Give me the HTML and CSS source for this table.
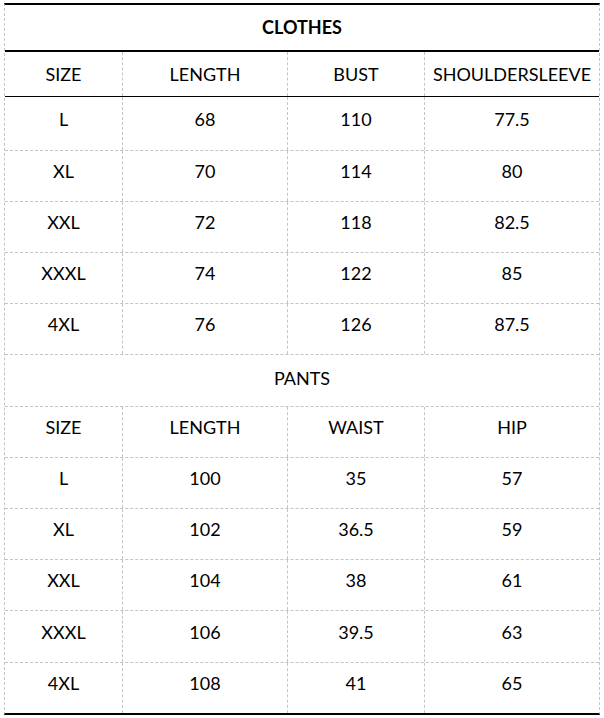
FILE: index.html
```html
<!DOCTYPE html>
<html lang="en">
<head>
<meta charset="utf-8">
<title>Size chart</title>
<link rel="stylesheet" href="styles.css">
</head>
<body>
<div class="sheet">
  <div class="row title-row"><div class="cell span">CLOTHES</div></div>
  <div class="row head-row">
    <div class="cell">SIZE</div><div class="cell">LENGTH</div><div class="cell">BUST</div><div class="cell">SHOULDERSLEEVE</div>
  </div>
  <div class="row data first">
    <div class="cell">L</div><div class="cell">68</div><div class="cell">110</div><div class="cell">77.5</div>
  </div>
  <div class="row data">
    <div class="cell">XL</div><div class="cell">70</div><div class="cell">114</div><div class="cell">80</div>
  </div>
  <div class="row data">
    <div class="cell">XXL</div><div class="cell">72</div><div class="cell">118</div><div class="cell">82.5</div>
  </div>
  <div class="row data">
    <div class="cell">XXXL</div><div class="cell">74</div><div class="cell">122</div><div class="cell">85</div>
  </div>
  <div class="row data">
    <div class="cell">4XL</div><div class="cell">76</div><div class="cell">126</div><div class="cell">87.5</div>
  </div>
  <div class="row section-row"><div class="cell span">PANTS</div></div>
  <div class="row data">
    <div class="cell">SIZE</div><div class="cell">LENGTH</div><div class="cell">WAIST</div><div class="cell">HIP</div>
  </div>
  <div class="row data">
    <div class="cell">L</div><div class="cell">100</div><div class="cell">35</div><div class="cell">57</div>
  </div>
  <div class="row data">
    <div class="cell">XL</div><div class="cell">102</div><div class="cell">36.5</div><div class="cell">59</div>
  </div>
  <div class="row data">
    <div class="cell">XXL</div><div class="cell">104</div><div class="cell">38</div><div class="cell">61</div>
  </div>
  <div class="row data tall">
    <div class="cell">XXXL</div><div class="cell">106</div><div class="cell">39.5</div><div class="cell">63</div>
  </div>
  <div class="row data last">
    <div class="cell">4XL</div><div class="cell">108</div><div class="cell">41</div><div class="cell">65</div>
  </div>
</div>
</body>
</html>
```

FILE: styles.css
```css
html, body {
  margin: 0;
  padding: 0;
  background: #fff;
}

body {
  font-family: Lato, "Open Sans", sans-serif;
  font-size: 18px;
  color: #000;
}

.sheet {
  margin: 3px 0 0 4px;
  width: 596px;
  box-sizing: border-box;
  border-top: 2px solid #000;
  border-bottom: 2px solid #000;
  border-left: 1px dashed #c4c4c4;
  border-right: 1px dashed #c4c4c4;
}

.row {
  display: grid;
  grid-template-columns: 118px 165px 137px 1fr;
  box-sizing: border-box;
  height: 51px;
  border-bottom: 1px dashed #c4c4c4;
}

.cell {
  display: flex;
  align-items: flex-end;
  justify-content: center;
  line-height: 20px;
  padding-bottom: 20px;
  border-right: 1px dashed #c4c4c4;
  white-space: nowrap;
}

.cell:last-child {
  border-right: none;
}

.cell.span {
  grid-column: 1 / -1;
}

.title-row {
  height: 47px;
  border-bottom: 2px solid #000;
}

.title-row .cell {
  font-weight: bold;
  align-items: center;
  padding-bottom: 2px;
}

.head-row {
  height: 45px;
  border-bottom: 1px solid #000;
}

.head-row .cell {
  align-items: center;
  padding-bottom: 0;
}

.data.first {
  height: 54px;
}

.data.first .cell {
  padding-bottom: 21px;
}

.section-row {
  height: 52px;
}

.section-row .cell {
  padding-bottom: 18px;
}

.data.tall {
  height: 52px;
}

.data.last {
  height: 50px;
  border-bottom: none;
}
```
